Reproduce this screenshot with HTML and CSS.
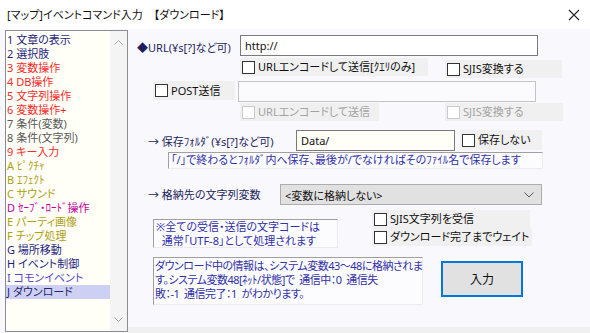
FILE: index.html
```html
<!DOCTYPE html>
<html lang="ja">
<head>
<meta charset="utf-8">
<link rel="stylesheet" href="styles.css">
</head>
<body>
<div class="window">
  <div class="titlebar">
    <span class="title">[マップ]イベントコマンド入力　【ダウンロード】</span>
    <svg class="close" width="12" height="12" viewBox="0 0 12 12"><path d="M1 1L11 11M11 1L1 11" stroke="#222" stroke-width="1.1" fill="none"/></svg>
  </div>
  <div class="body">
    <div class="list">
      <ul class="items">
        <li class="c-navy">1 文章の表示</li>
        <li class="c-navy">2 選択肢</li>
        <li class="c-red">3 変数操作</li>
        <li class="c-red">4 DB操作</li>
        <li class="c-red">5 文字列操作</li>
        <li class="c-red">6 変数操作+</li>
        <li class="c-gray">7 条件(変数)</li>
        <li class="c-gray">8 条件(文字列)</li>
        <li class="c-red">9 キー入力</li>
        <li class="c-olive">A ﾋﾟｸﾁｬ</li>
        <li class="c-olive">B ｴﾌｪｸﾄ</li>
        <li class="c-olive">C サウンド</li>
        <li class="c-mag">D ｾｰﾌﾞ・ﾛｰﾄﾞ操作</li>
        <li class="c-olive">E パーティ画像</li>
        <li class="c-olive">F チップ処理</li>
        <li class="c-navy">G 場所移動</li>
        <li class="c-navy">H イベント制御</li>
        <li class="c-blue">I コモンイベント</li>
        <li class="c-sel">J ダウンロード</li>
      </ul>
      <div class="scroll">
        <svg width="9" height="5" viewBox="0 0 9 5"><path d="M0.5 4.5L4.5 0.5L8.5 4.5" stroke="#a8a8a8" fill="none"/></svg>
        <svg width="9" height="5" viewBox="0 0 9 5"><path d="M0.5 0.5L4.5 4.5L8.5 0.5" stroke="#a8a8a8" fill="none"/></svg>
      </div>
    </div>
    <div class="main">
      <div class="row r1">
        <span class="label url-label">◆URL(¥s[?]など可)</span>
        <div class="input url-input">http://</div>
      </div>
      <div class="row r2">
        <div class="check g-enc"><span class="box"></span>URLエンコードして送信[ｸｴﾘのみ]</div>
        <div class="check g-sjis"><span class="box"></span>SJIS変換する</div>
      </div>
      <div class="row r3">
        <div class="check g-post"><span class="box"></span>POST送信</div>
        <div class="input post-input disabled"></div>
      </div>
      <div class="row r4">
        <div class="check dis g-enc2"><span class="box"></span>URLエンコードして送信</div>
        <div class="check dis g-sjis2"><span class="box"></span>SJIS変換する</div>
      </div>
      <div class="row r5">
        <span class="label dir-label">→ 保存ﾌｫﾙﾀﾞ(¥s[?]など可)</span>
        <div class="input dir-input">Data/</div>
        <div class="check g-nosave"><span class="box"></span>保存しない</div>
      </div>
      <div class="row r6">
        <div class="static help">「/」で終わるとﾌｫﾙﾀﾞ内へ保存、最後が/でなければそのﾌｧｲﾙ名で保存します</div>
      </div>
      <div class="row r7">
        <span class="label var-label">→ 格納先の文字列変数</span>
        <div class="select">
          <span>&lt;変数に格納しない&gt;</span>
          <svg width="10" height="6" viewBox="0 0 10 6"><path d="M0.5 0.5L5 5L9.5 0.5" stroke="#555" fill="none"/></svg>
        </div>
      </div>
      <div class="row r8">
        <div class="static note">※全ての受信・送信の文字コードは<br>&nbsp;&nbsp;通常「UTF-8」として処理されます</div>
        <div class="checks">
          <div class="check g-recv"><span class="box"></span>SJIS文字列を受信</div>
          <div class="check g-wait"><span class="box"></span>ダウンロード完了までウェイト</div>
        </div>
      </div>
      <div class="row r9">
        <div class="static info">ダウンロード中の情報は、システム変数43～48に格納されま<br>す。システム変数48[ﾈｯﾄ/状態]で&nbsp;&nbsp;通信中：0&nbsp;&nbsp;通信失<br>敗：-1&nbsp;&nbsp;通信完了：1&nbsp;&nbsp;がわかります。</div>
        <button class="btn">入力</button>
      </div>
      <div class="strip"></div>
    </div>
  </div>
</div>
</body>
</html>
```
FILE: styles.css
```css
* { box-sizing: border-box; }
html, body { margin: 0; padding: 0; }
body {
  width: 590px;
  height: 333px;
  overflow: hidden;
  font-family: "Noto Sans", "Noto Sans CJK JP", sans-serif;
  font-size: 11px;
  font-feature-settings: "palt" 1;
  color: #111;
  background: #f9f9fd;
}
.window { width: 590px; height: 333px; display: flex; flex-direction: column; }
.titlebar {
  height: 29px;
  background: #fff;
  display: flex;
  align-items: center;
  justify-content: space-between;
  padding: 0 10px 0 7px;
}
.title { font-size: 11px; color: #111; line-height: 14px; white-space: nowrap; }
.close { margin-top: 1px; }

.body { flex: 1; display: flex; }

.list {
  margin: 1px 0 0 5px;
  width: 123px;
  height: 302px;
  border: 1px solid #8c8c94;
  background: #fffff7;
  display: flex;
}
.items {
  list-style: none;
  margin: 0;
  padding: 2px 0 0 0;
  flex: 1;
  font-size: 11px;
  line-height: 14px;
}
.items li { padding-left: 1px; height: 14px; white-space: nowrap; }
.c-navy { color: #1e1e82; }
.c-red { color: #f52a2a; }
.c-gray { color: #5a5a5a; }
.c-olive { color: #aea014; }
.c-mag { color: #c4009c; }
.c-blue { color: #5448cc; }
.c-sel { color: #26266e; background: #cdd0f2; }
.scroll {
  width: 17px;
  background: #f4f4f4;
  display: flex;
  flex-direction: column;
  justify-content: space-between;
  align-items: center;
  padding: 9px 0 9px;
}

.main { flex: 1; display: flex; flex-direction: column; }
.row { display: flex; align-items: flex-start; flex-shrink: 0; }
.label { color: #1e1e5c; white-space: nowrap; line-height: 14px; }

.input {
  background: #fff;
  border: 1px solid #7a7a7a;
  height: 21px;
  padding: 2px 4px;
  line-height: 15px;
  color: #111;
}
.input.disabled { border-color: #c4c4c4; background: #fbfbfd; }

.check {
  display: flex;
  align-items: center;
  background: #f0f0f0;
  white-space: nowrap;
  line-height: 14px;
  color: #111;
}
.box {
  width: 13px;
  height: 13px;
  border: 1px solid #333;
  background: #fff;
  margin: 0 3px 0 2px;
  flex-shrink: 0;
}
.check.dis { color: #a2a2a2; }
.check.dis .box { border-color: #cacaca; }

.static {
  border-top: 1px solid #a0a0a0;
  border-left: 1px solid #a0a0a0;
  border-right: 1px solid #ececf0;
  border-bottom: 1px solid #ececf0;
  background: #fcfcff;
  color: #3030a8;
  line-height: 14px;
  padding: 1px 2px;
  white-space: nowrap;
}

/* row 1 */
.r1 { margin-top: 6px; height: 21px; }
.url-label { margin-left: 9px; width: 103px; padding-top: 6px; }
.url-input { width: 298px; }

/* row 2 */
.r2 { margin-top: 2px; height: 19px; }
.g-enc { margin-left: 112px; width: 188px; height: 18px; }
.g-sjis { margin-left: 17px; margin-top: 2px; width: 117px; height: 18px; }

/* row 3 */
.r3 { margin-top: 4px; height: 21px; }
.g-post { margin-left: 25px; width: 82px; height: 19px; }
.post-input { margin-left: 3px; width: 298px; }

/* row 4 */
.r4 { margin-top: 1px; height: 18px; }
.g-enc2 { margin-left: 112px; width: 139px; height: 18px; }
.g-sjis2 { margin-left: 66px; width: 118px; height: 18px; }

/* row 5 */
.r5 { margin-top: 9px; height: 21px; }
.dir-label { margin-left: 20px; width: 148px; padding-top: 5px; }
.dir-input { width: 159px; height: 21px; background: #fffff8; }
.g-nosave { margin-left: 5px; width: 82px; height: 20px; }

/* row 6 */
.r6 { margin-top: 1px; height: 17px; }
.help { margin-left: 40px; width: 375px; height: 17px; padding: 0 2px; }

/* row 7 */
.r7 { margin-top: 15px; height: 21px; }
.var-label { margin-left: 20px; width: 132px; padding-top: 4px; }
.select {
  width: 262px;
  height: 21px;
  background: #e1e1e1;
  border: 1px solid #adadad;
  display: flex;
  align-items: center;
  justify-content: space-between;
  padding: 0 7px 0 4px;
  color: #111;
}

/* row 8 */
.r8 { margin-top: 5px; height: 38px; }
.note { margin-left: 25px; margin-top: 9px; width: 185px; height: 29px; padding: 0 2px; }
.checks { margin-left: 34px; display: flex; flex-direction: column; }
.g-recv { width: 158px; height: 18px; }
.g-wait { width: 160px; height: 18px; }

/* row 9 */
.r9 { margin-top: 9px; height: 48px; }
.info { margin-left: 25px; width: 270px; height: 48px; padding: 1px 1px; letter-spacing: -0.5px; }
.btn {
  margin-left: 18px;
  margin-top: 4px;
  width: 82px;
  height: 36px;
  border: 2px solid #0078d7;
  background: #e1e1e1;
  font-family: inherit;
  font-size: 12px;
  color: #111;
  padding: 0;
}

.strip { margin-top: auto; height: 6px; background: #f0f0f0; }
```
